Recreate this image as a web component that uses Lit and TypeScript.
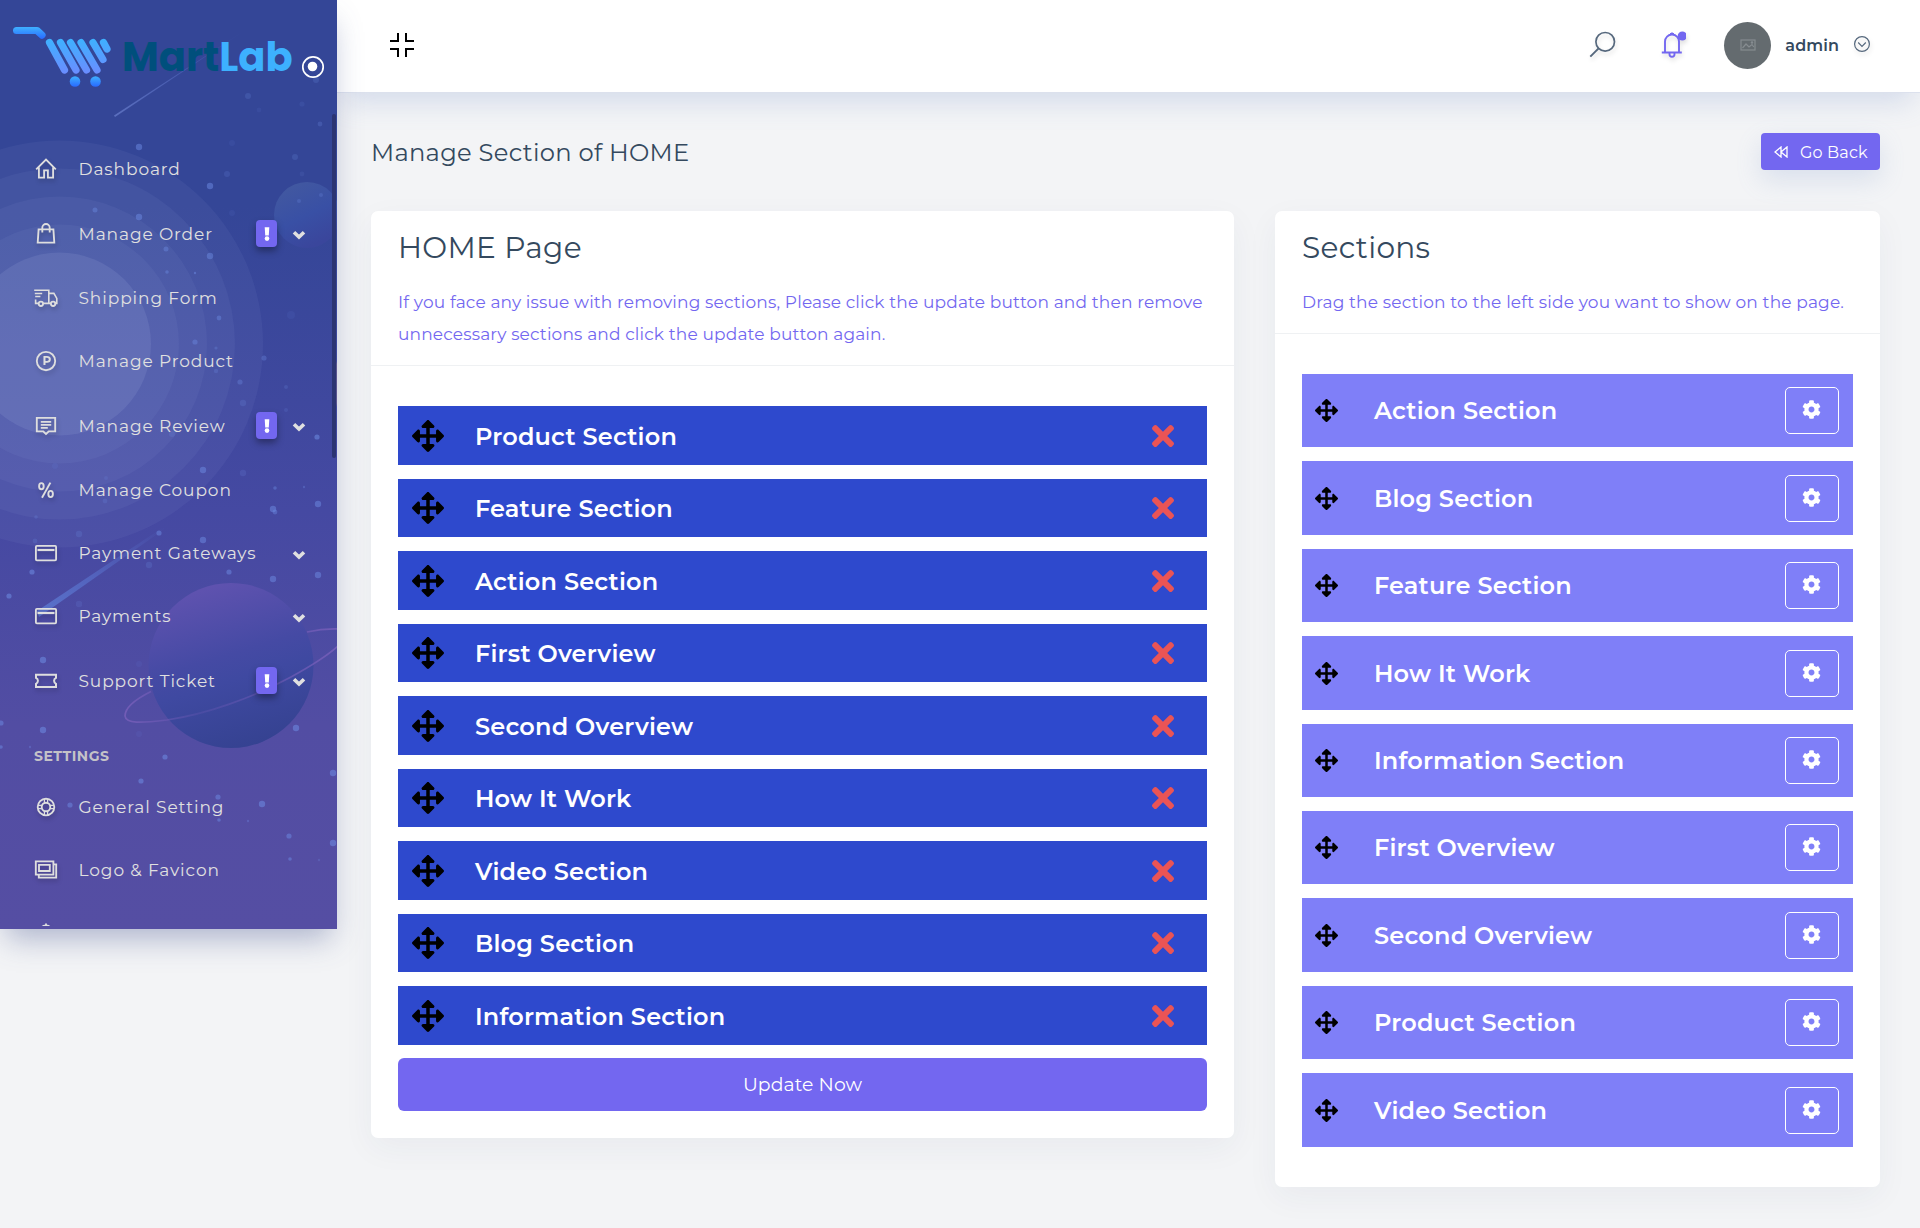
import { LitElement, html, css, svg } from "lit";
import { customElement } from "lit/decorators.js";

const ARROWS =
  "M352.201 425.775l-79.196 79.196c-9.373 9.373-24.568 9.373-33.941 0l-79.196-79.196c-15.119-15.119-4.411-40.971 16.971-40.97h51.162L228 284H127.196v51.162c0 21.382-25.851 32.09-40.971 16.971L7.029 272.937c-9.373-9.373-9.373-24.569 0-33.941L86.225 159.8c15.119-15.119 40.971-4.411 40.971 16.971V228H228V127.196h-51.23c-21.382 0-32.09-25.851-16.971-40.971l79.196-79.196c9.373-9.373 24.568-9.373 33.941 0l79.196 79.196c15.119 15.119 4.411 40.971-16.971 40.971h-51.162V228h100.804v-51.162c0-21.382 25.851-32.09 40.97-16.971l79.196 79.196c9.373 9.373 9.373 24.569 0 33.941L425.773 352.2c-15.119 15.119-40.971 4.411-40.97-16.971V284H284v100.804h51.23c21.382 0 32.09 25.851 16.971 40.971z";
const TIMES =
  "M242.72 256l100.07-100.07c12.28-12.28 12.28-32.19 0-44.48l-22.24-22.24c-12.28-12.28-32.19-12.28-44.48 0L176 189.28 75.93 89.21c-12.28-12.28-32.19-12.28-44.48 0L9.21 111.45c-12.28 12.28-12.28 32.19 0 44.48L109.28 256 9.21 356.07c-12.28 12.28-12.28 32.19 0 44.48l22.24 22.24c12.28 12.28 32.2 12.28 44.48 0L176 322.72l100.07 100.07c12.28 12.28 32.2 12.28 44.48 0l22.24-22.24c12.28-12.28 12.28-32.19 0-44.48L242.72 256z";
const COG =
  "M487.4 315.7l-42.6-24.6c4.3-23.2 4.3-47 0-70.2l42.6-24.6c4.9-2.8 7.1-8.6 5.5-14-11.1-35.6-30-67.8-54.7-94.6-3.8-4.1-10-5.1-14.8-2.3L380.8 110c-17.9-15.4-38.5-27.3-60.8-35.1V25.8c0-5.6-3.9-10.5-9.4-11.7-36.7-8.2-74.3-7.8-109.2 0-5.5 1.2-9.4 6.1-9.4 11.7V75c-22.2 7.9-42.8 19.8-60.8 35.1L88.7 85.5c-4.9-2.8-11-1.9-14.8 2.3-24.7 26.7-43.6 58.9-54.7 94.6-1.7 5.4.6 11.2 5.5 14L67.3 221c-4.3 23.2-4.3 47 0 70.2l-42.6 24.6c-4.9 2.8-7.1 8.6-5.5 14 11.1 35.6 30 67.8 54.7 94.6 3.8 4.1 10 5.1 14.8 2.3l42.6-24.6c17.9 15.4 38.5 27.3 60.8 35.1v49.2c0 5.6 3.9 10.5 9.4 11.7 36.7 8.2 74.3 7.8 109.2 0 5.5-1.2 9.4-6.1 9.4-11.7v-49.2c22.2-7.9 42.8-19.8 60.8-35.1l42.6 24.6c4.9 2.8 11 1.9 14.8-2.3 24.7-26.7 43.6-58.9 54.7-94.6 1.5-5.5-.7-11.3-5.6-14.1zM256 336c-44.1 0-80-35.9-80-80s35.9-80 80-80 80 35.9 80 80-35.9 80-80 80z";

const card = svg`<rect x="1.9" y="4.9" width="20.2" height="14.4" rx="1"/><path d="M3.5 9h17" stroke-width="2.2"/>`;
const ICONS: Record<string, unknown> = {
  home: svg`<path d="M2.2 12.4 12 2.6l9.8 9.8M4.9 10.500v10.100h5.200v-7.200h3.800v7.200h5.200V10.500"/>`,
  bag: svg`<path d="M4.600 7.400h14.800l.9 13.200H3.700z"/><path d="M8.300 10.500V5.700a3.700 3.700 0 0 1 7.400 0v4.800"/>`,
  truck: svg`<path d="M.2 4.200h14.600v13.200H9.200M15 7.400h4.900l2.900 5v5h-1.900M17.300 17.400H15M4.600 17.400H1.600v-4M.8 7.500h7.400M1.200 10.500h5.200" stroke-width="1.6"/><circle cx="6.9" cy="17.8" r="2.2"/><circle cx="19.1" cy="17.8" r="2.2"/>`,
  product: svg`<circle cx="12" cy="12" r="9.200"/><text class="letter" x="8.500" y="16.200" font-size="12">P</text>`,
  review: svg`<path d="M2.800 3.900h18.400v13.400h-6.400L12 20l-2.800-2.700H2.800z"/><path d="M6.800 7.900h10.400M6.800 10.900h10.400M6.800 13.900h7"/>`,
  percent: svg`<ellipse cx="7.400" cy="8.200" rx="2.300" ry="3.100" stroke-width="1.900"/><ellipse cx="16.600" cy="16" rx="2.300" ry="3.100" stroke-width="1.900"/><path d="M16.400 4.600 8 19.800" stroke-width="1.900"/>`,
  card,
  ticket: svg`<path d="M2 5.700h20v3.100a3.300 3.300 0 0 0 0 6v3.100H2v-3.100a3.300 3.300 0 0 0 0-6z" stroke-width="2"/>`,
  ring: svg`<circle cx="12" cy="12" r="8.300"/><circle cx="12" cy="12" r="4.300"/><path d="M10.400 3.800v4.400M13.600 3.800v4.400M10.400 15.800v4.400M13.600 15.800v4.400M3.800 10.400h4.400M3.800 13.600h4.400M15.800 10.400h4.400M15.800 13.600h4.400" stroke-width="1.200"/>`,
  images: svg`<path d="M1.800 3.400h17.600v13.200H1.800z"/><path d="M5 6.800h10.800v6.200H5z"/><path d="M4.800 17v2.600h17.400V6.400h-2.600"/>`,
  bell: svg`<path d="M5.500 17.500V11a6.500 6.500 0 0 1 13 0v6.500M3.500 17.500h17M12 2.600v2"/>`,
};

interface Item { icon: string; label: string; badge?: boolean; arrow?: boolean }
const MAIN: Item[] = [
  { icon: "home", label: "Dashboard" },
  { icon: "bag", label: "Manage Order", badge: true, arrow: true },
  { icon: "truck", label: "Shipping Form" },
  { icon: "product", label: "Manage Product" },
  { icon: "review", label: "Manage Review", badge: true, arrow: true },
  { icon: "percent", label: "Manage Coupon" },
  { icon: "card", label: "Payment Gateways", arrow: true },
  { icon: "card", label: "Payments", arrow: true },
  { icon: "ticket", label: "Support Ticket", badge: true, arrow: true },
];
const SETTINGS: Item[] = [
  { icon: "ring", label: "General Setting" },
  { icon: "images", label: "Logo & Favicon" },
];
const ACTIVE = ["Product Section", "Feature Section", "Action Section", "First Overview", "Second Overview", "How It Work", "Video Section", "Blog Section", "Information Section"];
const AVAILABLE = ["Action Section", "Blog Section", "Feature Section", "How It Work", "Information Section", "First Overview", "Second Overview", "Product Section", "Video Section"];

// x, y, radius, opacity
const STARS: [number, number, number, number][] = [
  [139, 147, 3.2, 0.6], [210, 186, 3.2, 0.6], [139, 217, 3.2, 0.6], [95, 210, 2.5, 0.5], [166, 249, 2.5, 0.5], [210, 256, 3.2, 0.55],
  [167, 272, 1.8, 0.5], [195, 273, 1.2, 0.6], [219, 318, 2.4, 0.5], [248, 96, 3, 0.25], [316, 80, 3, 0.25], [302, 104, 2.6, 0.15],
  [320, 124, 2.4, 0.3], [295, 157, 3, 0.25], [227, 174, 3, 0.22], [232, 143, 3, 0.12], [302, 174, 2.4, 0.14], [291, 315, 4, 0.12],
  [259, 110, 2.4, 0.12], [232, 213, 3, 0.12], [321, 195, 2, 0.3], [299, 201, 2, 0.3],
  [195, 342, 2.6, 0.5], [216, 348, 1.6, 0.35], [264, 358, 2.6, 0.4], [216, 371, 2.2, 0.3], [240, 382, 2.6, 0.4], [243, 403, 3.2, 0.25],
  [286, 387, 2, 0.25], [286, 410, 2, 0.2], [172, 434, 3, 0.25], [317, 437, 2.6, 0.65], [203, 470, 3.2, 0.6], [243, 473, 3.2, 0.22],
  [275, 488, 1.8, 0.5], [304, 487, 1.2, 0.4], [273, 509, 3.2, 0.6], [275, 512, 2.4, 0.5], [318, 504, 3.2, 0.6], [159, 533, 2.6, 0.6],
  [203, 540, 3.2, 0.6], [79, 534, 3.2, 0.25], [35, 541, 2.4, 0.25], [55, 466, 3, 0.15], [106, 478, 2, 0.2], [105, 501, 2.4, 0.25], [36, 517, 1.8, 0.3],
  [32, 572, 2.6, 0.65], [9, 596, 2.6, 0.65], [149, 565, 3.2, 0.25], [229, 572, 2.6, 0.6], [273, 579, 3.2, 0.6], [318, 575, 3.2, 0.6], [79, 604, 3.2, 0.2],
  [43, 660, 3.2, 0.65], [43, 730, 3.2, 0.65], [1, 723, 2.6, 0.6], [1, 747, 1.8, 0.6], [30, 747, 1.2, 0.4], [139, 664, 3, 0.12], [139, 734, 3, 0.12],
  [165, 757, 2.6, 0.65], [141, 781, 2.6, 0.65], [296, 728, 3.2, 0.65], [333, 773, 3.2, 0.65], [218, 797, 2.6, 0.6], [262, 804, 3.2, 0.65],
  [70, 805, 2.6, 0.6], [219, 820, 1.8, 0.6], [248, 821, 1.2, 0.4], [289, 836, 2.6, 0.6], [333, 843, 3.2, 0.65], [290, 859, 1.8, 0.6], [319, 860, 1.2, 0.3],
];
const RINGS = [203.5, 175.5, 147.5, 119.5, 91.5];
const CART_BARS = [[49.5, 42.5, 64.5, 70], [60.5, 42.5, 76, 70], [70.5, 42.5, 86.5, 70], [81, 42.5, 97, 70], [93, 42.5, 103, 59.5], [103.5, 42.5, 107, 49]];

@customElement("app-root")
export class AppRoot extends LitElement {
  static styles = css`
    :host {
      display: block;
      height: 1228px;
      position: relative;
      overflow: hidden;
      background: #f3f4f6;
      font-family: "Montserrat", "Inter", sans-serif;
      font-size: 17px;
      letter-spacing: 0.01em;
      color: #34495e;
    }
    * { box-sizing: border-box; }
    h1, h2, h3, p { margin: 0; font-weight: 400; }
    svg { display: block; flex: none; }
    .layout { display: flex; align-items: flex-start; height: 100%; }

    .side {
      position: relative;
      z-index: 2;
      width: 337px;
      height: 929px;
      flex: none;
      background: linear-gradient(180deg, #344697 0, #344697 22%, #4549a2 55%, #524da3 78%, #554ea3 100%);
      box-shadow: 0 16px 28px -6px rgba(80, 95, 150, 0.42);
      color: #e0e0e0;
    }
    .sky { position: absolute; inset: 0; }
    .thumb { position: absolute; left: 332px; top: 114px; width: 4px; height: 344px; border-radius: 2px; background: #2c3572; }
    .inner { position: relative; height: 926px; overflow: hidden; }
    .brand { display: flex; height: 137.5px; }
    .logo-word { font-family: "Poppins", "Montserrat", sans-serif; font-weight: 700; font-size: 40px; letter-spacing: 0; }
    .item { display: flex; align-items: center; height: 63px; padding-left: 34px; }
    .item.tall { height: 66px; }
    .item svg { fill: none; stroke: #dedede; stroke-width: 1.85; filter: drop-shadow(1px 3px 2px rgba(0, 0, 0, 0.18)); }
    .item .letter { fill: #dedede; stroke: none; font-weight: 700; }
    .label { flex: 1; padding-left: 20.5px; letter-spacing: 0.9px; font-size: 17px; line-height: 24px; }
    .badge {
      width: 21px; height: 27px; border-radius: 4px; background: #7367f0;
      display: flex; align-items: center; justify-content: center;
      margin: 0 15px 0 0; box-shadow: 0 4px 7px rgba(0, 0, 0, 0.35);
    }
    .item .badge svg { filter: none; fill: #fff; stroke: none; }
    .item .chev { margin: 3px 31px 0 0; stroke: #e0e0e0; stroke-width: 3.6; filter: none; }
    .caption { height: 62px; padding: 32px 0 0 34px; font-size: 14px; line-height: 20px; font-weight: 700; color: #c4c2c8; letter-spacing: 0.5px; }

    .main { flex: 1; min-width: 0; }
    .top {
      height: 93px; background: #fff; border-bottom: 1px solid #dce1ed;
      display: flex; align-items: center; padding: 0 49px 2px 49px;
      box-shadow: 0 16px 28px -8px rgba(115, 143, 200, 0.26);
    }
    .grow { flex: 1; }
    .top svg { fill: none; }
    .soft { filter: drop-shadow(1px 3px 2px rgba(0, 0, 0, 0.12)); }
    .notify { margin-left: 42px; }
    .lift { position: relative; top: -1px; }
    .avatar { width: 47px; height: 47px; border-radius: 50%; background: #646b6f; display: flex; align-items: center; justify-content: center; margin: 0 14px 0 38px; }
    .user { font-size: 16px; font-weight: 600; letter-spacing: 0.1px; color: #34495e; margin-right: 14px; }

    .content { padding: 40px 40px 0 34px; }
    .head { display: flex; align-items: center; justify-content: space-between; height: 37px; }
    .title { font-size: 24.2px; letter-spacing: 0.3px; line-height: 30px; padding-top: 2px; }
    .back {
      display: flex; align-items: center; gap: 12px; width: 119px; height: 37px; padding: 1px 0 0 13px; border-radius: 4px;
      background: #7367f0; color: #fff; font-size: 16px; letter-spacing: 0.16px;
      box-shadow: 0 10px 26px rgba(115, 143, 200, 0.2);
    }
    .cards { display: grid; grid-template-columns: 863px 605px; gap: 41px; align-items: start; padding-top: 41px; }
    .card { background: #fff; border-radius: 7px; box-shadow: 0 10px 32px rgba(44, 58, 100, 0.05); }
    .card-head { padding: 18px 27px 15px; border-bottom: 1px solid #eff1f3; }
    .card-head h2 { font-size: 29.6px; line-height: 37px; letter-spacing: 0.3px; margin-bottom: 20px; }
    .card-head p { color: #7367f0; line-height: 32px; font-size: 17px; margin: 0 -4px 0 0; letter-spacing: 0.15px; }
    .left-body { padding: 40px 27px 27px; display: flex; flex-direction: column; gap: 14px; }
    .right-body { padding: 40px 27px; display: flex; flex-direction: column; gap: 14px; }
    .row { display: flex; align-items: center; color: #fff; }
    .row h3 { flex: 1; font-size: 24px; font-weight: 600; line-height: 30px; letter-spacing: 0.18px; padding-top: 2px; }
    .row.active { height: 58.5px; background: #2e49cd; padding: 0.6px 33px 0 14px; }
    .row.active h3 { padding-left: 31px; }
    .row.free { height: 73.4px; background: #7f7ff8; padding: 0.5px 14px 0 13px; }
    .row.free h3 { padding-left: 36px; padding-top: 1px; }
    .gear { width: 54px; height: 47px; border: 1px solid #fff; border-radius: 5px; display: flex; justify-content: center; padding: 12px 1px 0 0; }
    .update { height: 53px; margin-top: -1px; border-radius: 6px; background: #7367f0; color: #fff; display: flex; align-items: center; justify-content: center; font-size: 18.8px; letter-spacing: 0.1px; }
  `;

  private item(i: Item) {
    return html`<div class="item ${i.badge ? "tall" : ""}">
      <svg width="24" height="24" viewBox="0 0 24 24">${ICONS[i.icon]}</svg>
      <span class="label">${i.label}</span>
      ${i.badge ? html`<span class="badge"><svg width="6" height="14" viewBox="0 0 6 14"><path d="M.7.2h4.6L4.8 8.6H1.2z"/><circle cx="3" cy="11.6" r="2.3"/></svg></span>` : ""}
      ${i.arrow ? html`<svg class="chev" width="14" height="10" viewBox="0 0 14 10"><path d="M2 2.2 7 7l5-4.8"/></svg>` : ""}
    </div>`;
  }

  private sidebar() {
    return html`<aside class="side">
      <svg class="sky" width="337" height="929" viewBox="0 0 337 929">
        <defs>
          <linearGradient id="moon" x1="0" y1="0" x2="0.5" y2="1"><stop offset="0" stop-color="#445a9f"/><stop offset="0.6" stop-color="#3950a5"/><stop offset="1" stop-color="#3a469c"/></linearGradient>
          <linearGradient id="planet" x1="0.3" y1="0" x2="0.6" y2="1"><stop offset="0" stop-color="#6153b0"/><stop offset="0.45" stop-color="#454aa4"/><stop offset="0.6" stop-color="#3f49a1"/><stop offset="1" stop-color="#354291"/></linearGradient>
          <linearGradient id="comet" x1="0" y1="1" x2="1" y2="0"><stop offset="0" stop-color="#5c78d0" stop-opacity="0.9"/><stop offset="0.4" stop-color="#5870cb" stop-opacity="0.7"/><stop offset="1" stop-color="#5870cb" stop-opacity="0"/></linearGradient>
          <linearGradient id="streak" x1="0" y1="1" x2="1" y2="0"><stop offset="0" stop-color="#5b6fbe"/><stop offset="1" stop-color="#5870cb" stop-opacity="0"/></linearGradient>
          <linearGradient id="orbit" x1="0" y1="0" x2="1" y2="0"><stop offset="0" stop-color="#7a60bb" stop-opacity="0.8"/><stop offset="0.35" stop-color="#6a58b4" stop-opacity="0.3"/><stop offset="1" stop-color="#7a60bb" stop-opacity="0.8"/></linearGradient>
        </defs>
        ${RINGS.map((r, n) => svg`<circle cx="59.5" cy="344" r=${r} fill="#9fb0e0" opacity=${n === 4 ? 0.16 : 0.075}/>`)}
        <circle cx="307" cy="215" r="33" fill="url(#moon)"/>
        <path d="M337 361q-8 20 0 46z" fill="#5a5590"/>
        ${STARS.map(([x, y, r, o]) => svg`<circle cx=${x} cy=${y} r=${r} fill="#6f8fe6" opacity=${o * 0.8}/>`)}
        <path d="M114 115.500 250 27l-135 90z" fill="url(#streak)"/>
        <path d="M39 617 37 611 162 528l4 0z" fill="url(#comet)"/>
        <circle cx="231" cy="665.500" r="82.500" fill="url(#planet)"/>
        <path d="M151 691.500C134 700 125 709 125 716c1 8 16 7 42 4 40-6 85-22 124-43 20-11 35-20 47-31M307 632q16-3.500 31-3" fill="none" stroke="url(#orbit)" stroke-width="1.700"/>
      </svg>
      <div class="thumb"></div>
      <div class="inner">
        <div class="brand">
          <svg width="337" height="137" viewBox="0 0 337 137">
            <defs>
              <linearGradient id="bar" gradientUnits="userSpaceOnUse" x1="0" y1="40" x2="0" y2="73"><stop offset="0" stop-color="#3fb0ff"/><stop offset="1" stop-color="#6a8dff"/></linearGradient>
              <linearGradient id="handle" gradientUnits="userSpaceOnUse" x1="0" y1="27" x2="0" y2="39"><stop offset="0" stop-color="#3fb0ff"/><stop offset="1" stop-color="#2869ff"/></linearGradient>
              <linearGradient id="wheel" x1="0" y1="0" x2="0" y2="1"><stop offset="0" stop-color="#3fb0ff"/><stop offset="1" stop-color="#2869ff"/></linearGradient>
            </defs>
            <g fill="none" stroke-linecap="round" stroke-width="7.200">
              <path d="M16.600 30.500H37l5 4.600" stroke="url(#handle)" stroke-linejoin="round"/>
              ${CART_BARS.map(([a, b, c, d]) => svg`<path d="M${a} ${b}L${c} ${d}" stroke="url(#bar)"/>`)}
            </g>
            <circle cx="75" cy="81.500" r="5.300" fill="url(#wheel)"/><circle cx="95.500" cy="81.500" r="5.300" fill="url(#wheel)"/>
            <text class="logo-word" x="122" y="71" fill="#004f7c">Mart<tspan fill="#3db1ff">Lab</tspan></text>
            <circle cx="313" cy="67" r="10.200" fill="none" stroke="#fff" stroke-width="1.700"/><circle cx="312.500" cy="66.500" r="4.800" fill="#fff"/>
          </svg>
        </div>
        ${MAIN.map((i) => this.item(i))}
        <div class="caption">SETTINGS</div>
        ${SETTINGS.map((i) => this.item(i))}
        ${this.item({ icon: "bell", label: "" })}
      </div>
    </aside>`;
  }

  private topbar() {
    return html`<header class="top">
      <svg width="32" height="32" viewBox="-4 -4 32 32" stroke="#000" stroke-width="2"><path d="M8 0v8H0M16 0v8h8M8 24v-8H0M16 24v-8h8"/></svg>
      <span class="grow"></span>
      <svg class="soft lift" width="28" height="28" viewBox="0 0 28 28" stroke="#56687d" stroke-width="1.700"><circle cx="17.200" cy="11.800" r="9.300"/><path d="M10.600 18.400 2.300 26.600" stroke-width="2"/></svg>
      <svg class="soft lift notify" width="28" height="28" viewBox="0 0 28 28" stroke="#7367f0" stroke-width="1.900"><path d="M7 22.400V11.500a7 7 0 0 1 14 0v10.900M3.800 22.500h20M14 4.500V2.500M12 4h4"/><path d="M11.500 23v1.200a2.500 2.500 0 0 0 5 0V23"/><circle cx="24.300" cy="6" r="4.600" fill="#7367f0" stroke="none"/></svg>
      <span class="avatar"><svg width="16" height="12" viewBox="0 0 16 12" stroke="#868c90" stroke-width="1.200"><rect x="1" y="1" width="14" height="10"/><path d="M2.500 9 6 5l3 3 3-2.500L13.800 8"/><circle cx="12" cy="3.500" r=".7"/></svg></span>
      <span class="user">admin</span>
      <svg class="soft lift" width="18" height="18" viewBox="0 0 18 18" stroke="#56687d" stroke-width="1.200"><circle cx="9" cy="9" r="7.400"/><path d="m5.200 7.500 3.800 3.800 3.800-3.800"/></svg>
    </header>`;
  }

  render() {
    return html`<div class="layout">
      ${this.sidebar()}
      <div class="main">
        ${this.topbar()}
        <div class="content">
          <div class="head">
            <h1 class="title">Manage Section of HOME</h1>
            <div class="back"><svg width="14" height="12" viewBox="0 0 14 12" fill="none" stroke="#fff" stroke-width="1.300"><path d="M7 1 1 6l6 5zM13 1 7 6l6 5z"/></svg>Go Back</div>
          </div>
          <div class="cards">
            <section class="card">
              <div class="card-head"><h2>HOME Page</h2><p>If you face any issue with removing sections, Please click the update button and then remove unnecessary sections and click the update button again.</p></div>
              <div class="left-body">
                ${ACTIVE.map((s) => html`<div class="row active">
                  <svg width="32" height="32" viewBox="0 0 512 512"><path d=${ARROWS}/></svg>
                  <h3>${s}</h3>
                  <svg width="22" height="32" viewBox="0 0 352 512"><path fill="#ea5455" d=${TIMES}/></svg>
                </div>`)}
                <div class="update">Update Now</div>
              </div>
            </section>
            <section class="card">
              <div class="card-head"><h2>Sections</h2><p>Drag the section to the left side you want to show on the page.</p></div>
              <div class="right-body">
                ${AVAILABLE.map((s) => html`<div class="row free">
                  <svg width="23" height="23" viewBox="0 0 512 512"><path d=${ARROWS}/></svg>
                  <h3>${s}</h3>
                  <div class="gear"><svg width="19" height="19" viewBox="0 0 512 512"><path fill="#fff" d=${COG}/></svg></div>
                </div>`)}
              </div>
            </section>
          </div>
        </div>
      </div>
    </div>`;
  }
}
